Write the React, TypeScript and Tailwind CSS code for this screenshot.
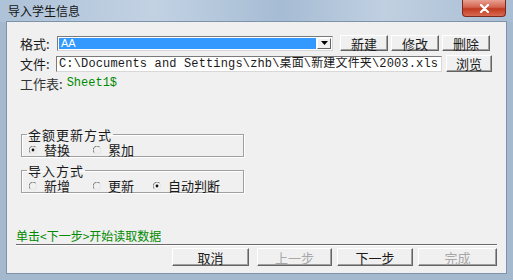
import { ReactNode } from "react";

const cjk = "font-['Noto_Sans_CJK_SC',sans-serif]";
const mono = "font-['Liberation_Mono','Noto_Sans_CJK_SC',monospace]";

function WinButton({
  label,
  disabled,
  className,
}: {
  label: string;
  disabled?: boolean;
  className: string;
}) {
  return (
    <div
      className={`flex items-center justify-center border border-t-white border-l-white border-r-[#646464] border-b-[#646464] bg-[#f0f0f0] shadow-[inset_-1px_-1px_0_#a0a0a0] text-[13px] leading-none ${cjk} ${
        disabled ? "text-[#a8a8a8]" : "text-[#1a1a1a]"
      } ${className}`}
    >
      {label}
    </div>
  );
}

function Radio({ label, checked, className }: { label: string; checked?: boolean; className: string }) {
  return (
    <div className={`flex items-center ${className}`}>
      <svg width="8" height="8" viewBox="0 0 8 8" className="mr-[7px]">
        <path d="M1.2 6.8 A3.96 3.96 0 0 1 6.8 1.2" stroke="#7a7a7a" fill="none" />
        <path d="M6.8 1.2 A3.96 3.96 0 0 1 1.2 6.8" stroke="#e4e4e4" fill="none" />
        {checked && <circle cx="4" cy="4" r="1.4" fill="#111" />}
      </svg>
      <span className={`text-[13px] leading-[13px] text-[#1a1a1a] ${cjk}`}>{label}</span>
    </div>
  );
}

function GroupBox({ title, children, className }: { title: string; children: ReactNode; className: string }) {
  return (
    <fieldset
      className={`ml-[14px] w-[223px] border border-[#a0a0a0] shadow-[1px_1px_0_#ffffff,inset_1px_1px_0_#ffffff] ${className}`}
    >
      <legend className={`ml-[5px] px-[1px] text-[13px] leading-[13px] tracking-[1px] text-[#1a1a1a] ${cjk}`}>{title}</legend>
      <div className="flex h-[15px] items-center pl-[7px] pt-[2px]">{children}</div>
    </fieldset>
  );
}

export default function App() {
  return (
    <div className="h-[280px] w-[513px] overflow-hidden bg-[#a4b8ce]">
      {/* title bar */}
      <div className="flex h-[22px] items-start justify-between bg-[linear-gradient(90deg,#adc1d7_0%,#c2d2e3_30%,#a6bcd4_55%,#c0d0e1_75%,#a9bdd3_100%)]">
        <span className={`pl-[8px] pt-[4px] text-[12px] leading-[14px] text-[#141414] ${cjk}`}>
          导入学生信息
        </span>
        <div className="mr-[7px] flex h-[17px] w-[44px] items-center justify-center rounded-b-[4px] border border-t-0 border-[#7a2a20] bg-[linear-gradient(180deg,#e8a092_0%,#d4634f_45%,#c0391f_55%,#d86a52_100%)]">
          <svg width="11" height="9" viewBox="0 0 11 9">
            <path d="M2 1 L9 8 M9 1 L2 8" stroke="#ffffff" strokeWidth="2.2" strokeLinecap="round" />
          </svg>
        </div>
      </div>

      {/* client area */}
      <div className="mx-[7px] h-[251px] bg-[#f0f0f0] shadow-[0_0_0_1px_#7e93aa]">
        <div className="box-content flex h-[16px] items-center pl-[13px] pt-[13px]">
          <span className={`w-[37px] text-[13px] leading-none text-[#1a1a1a] ${cjk}`}>格式:</span>
          <div className="flex h-[15px] w-[276px] items-center border border-t-[#7a7a7a] border-l-[#7a7a7a] border-r-[#d8d8d8] border-b-[#d8d8d8] bg-white p-[1px]">
            <div className="flex h-full flex-1 items-center bg-[#3399ff] pl-[2px] font-['Liberation_Sans',sans-serif] text-[11px] text-white">
              AA
            </div>
            <div className="ml-[1px] flex h-full w-[14px] items-center justify-center border border-t-white border-l-white border-r-[#646464] border-b-[#646464] bg-[#f0f0f0]">
              <svg width="7" height="4" viewBox="0 0 7 4">
                <path d="M0 0 H7 L3.5 4 Z" fill="#000" />
              </svg>
            </div>
          </div>
          <div className="ml-[7px] flex gap-[3px]">
            <WinButton label="新建" className="h-[16px] w-[48px]" />
            <WinButton label="修改" className="h-[16px] w-[48px]" />
            <WinButton label="删除" className="h-[16px] w-[48px]" />
          </div>
        </div>

        <div className="mt-[4px] flex h-[17px] items-center pl-[13px]">
          <span className={`w-[36px] text-[13px] leading-none text-[#1a1a1a] ${cjk}`}>文件:</span>
          <div
            className={`flex h-[16px] w-[386px] items-center overflow-hidden whitespace-nowrap border border-t-[#7a7a7a] border-l-[#7a7a7a] border-r-[#d8d8d8] border-b-[#d8d8d8] bg-white pl-[2px] text-[12px] leading-none tracking-[0.15px] text-[#1a1a1a] ${mono}`}
          >
            C:\Documents and Settings\zhb\桌面\新建文件夹\2003.xls
          </div>
          <WinButton label="浏览" className="ml-[4px] h-[17px] w-[46px]" />
        </div>

        <div className="mt-[4px] flex h-[14px] items-center pl-[13px]">
          <span className={`text-[13px] leading-none text-[#333] ${cjk}`}>工作表:</span>
          <span className={`ml-[4px] text-[12px] leading-none text-[#008a00] ${mono}`}>Sheet1$</span>
        </div>

        <GroupBox title="金额更新方式" className="mt-[38px]">
          <Radio label="替换" checked className="w-[64px]" />
          <Radio label="累加" className="w-[60px]" />
        </GroupBox>

        <GroupBox title="导入方式" className="mt-[7px]">
          <Radio label="新增" className="w-[64px]" />
          <Radio label="更新" className="w-[60px]" />
          <Radio label="自动判断" checked className="w-[80px]" />
        </GroupBox>

        <div className={`mt-[36px] pl-[9px] text-[12px] leading-[14px] text-[#008a00] ${cjk}`}>单击&lt;下一步&gt;开始读取数据</div>
        <div className="ml-[9px] mt-[1px] h-[2px] w-[481px] border-t border-t-[#6a6a6a] border-b border-b-white" />

        <div className="mt-[2px] flex pl-[165px]">
          <WinButton label="取消" className="h-[18px] w-[77px]" />
          <WinButton label="上一步" disabled className="ml-[8px] h-[18px] w-[75px]" />
          <WinButton label="下一步" className="ml-[5px] h-[18px] w-[76px]" />
          <WinButton label="完成" disabled className="ml-[5px] h-[18px] w-[79px]" />
        </div>
      </div>
    </div>
  );
}
